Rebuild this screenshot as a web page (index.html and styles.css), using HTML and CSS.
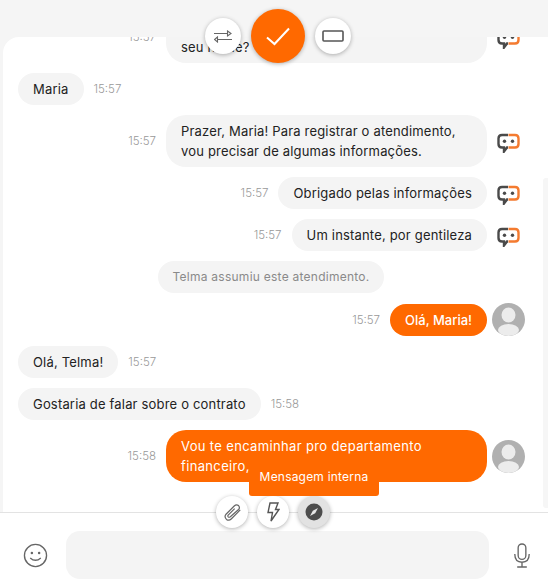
FILE: index.html
```html
<!DOCTYPE html>
<html lang="en">

<head>
    <meta charset="UTF-8">
    <meta name="viewport" content="width=device-width, initial-scale=1.0">
    <title>Atendimento</title>
    <link rel="stylesheet" href="styles.css">
</head>

<body>
    <svg class="sprites" width="0" height="0">
        <symbol id="bot" viewBox="0 0 23 20">
            <path d="M11 2H5Q1.500 2 1.500 5.500V11Q1.500 14.500 5 14.500H7V18.500L10 14.500H11" fill="none" stroke="#4a4a4a" stroke-width="2.400" />
            <path d="M11.500 2H18Q21.500 2 21.500 5.500V11Q21.500 14.500 18 14.500H11.500" fill="none" stroke="#f47b30" stroke-width="2.400" />
            <circle cx="7.500" cy="8.200" r="1.700" fill="#4a4a4a" />
            <circle cx="15.500" cy="8.200" r="1.700" fill="#4a4a4a" />
        </symbol>
        <symbol id="avatar" viewBox="0 0 33 33">
            <circle cx="16.500" cy="16.500" r="16.500" fill="#b0b0b0" />
            <ellipse cx="16.500" cy="12" rx="7" ry="7.500" fill="#ececec" />
            <ellipse cx="16.500" cy="27" rx="10.500" ry="6" fill="#ececec" />
        </symbol>
    </svg>

    <div class="app">
        <!-- Top actions -->
        <div class="top-band"></div>
        <div class="top-actions">
            <button class="round">
                <svg width="18" height="13" viewBox="0 0 18 13" fill="none" stroke="#666" stroke-width="1.100">
                    <path d="M0 3.500H14M3 9.500H18" />
                    <path d="M13.500 1L17 3.500L13.500 6Z" />
                    <path d="M3.500 7L0.500 9.500L3.500 12Z" />
                </svg>
            </button>
            <button class="round round-main">
                <svg width="24" height="19" viewBox="0 0 24 19" fill="none" stroke="#fff" stroke-width="2">
                    <path d="M1 10.500L8.500 17L23 1.500" />
                </svg>
            </button>
            <button class="round">
                <svg width="22" height="12" viewBox="0 0 22 12" fill="none" stroke="#555" stroke-width="1.600">
                    <rect x="1" y="1" width="20" height="10" rx="1" />
                </svg>
            </button>
        </div>

        <!-- Messages -->
        <div class="chat">
            <div class="scroll-track"></div>
            <div class="messages">
                <div class="row out">
                    <span class="time">15:57</span>
                    <p class="bubble wide">Antes de continuar, pode me dizer<br>seu nome?</p>
                    <svg class="side-icon"><use href="#bot" /></svg>
                </div>
                <div class="row in">
                    <p class="bubble">Maria</p>
                    <span class="time">15:57</span>
                </div>
                <div class="row out">
                    <span class="time">15:57</span>
                    <p class="bubble wide">Prazer, Maria! Para registrar o atendimento,<br>vou precisar de algumas informações.</p>
                    <svg class="side-icon"><use href="#bot" /></svg>
                </div>
                <div class="row out">
                    <span class="time">15:57</span>
                    <p class="bubble">Obrigado pelas informações</p>
                    <svg class="side-icon"><use href="#bot" /></svg>
                </div>
                <div class="row out">
                    <span class="time">15:57</span>
                    <p class="bubble">Um instante, por gentileza</p>
                    <svg class="side-icon"><use href="#bot" /></svg>
                </div>
                <div class="row system">
                    <p class="bubble">Telma assumiu este atendimento.</p>
                </div>
                <div class="row out">
                    <span class="time">15:57</span>
                    <p class="bubble orange">Olá, Maria!</p>
                    <svg class="side-avatar"><use href="#avatar" /></svg>
                </div>
                <div class="row in">
                    <p class="bubble">Olá, Telma!</p>
                    <span class="time">15:57</span>
                </div>
                <div class="row in">
                    <p class="bubble">Gostaria de falar sobre o contrato</p>
                    <span class="time">15:58</span>
                </div>
                <div class="row out">
                    <span class="time">15:58</span>
                    <p class="bubble orange wide">Vou te encaminhar pro departamento<br>financeiro,</p>
                    <svg class="side-avatar"><use href="#avatar" /></svg>
                </div>
            </div>
        </div>

        <!-- Composer -->
        <div class="composer">
            <div class="tools">
                <span class="tooltip">Mensagem interna</span>
                <button class="round tool">
                    <svg width="19" height="19" viewBox="0 0 22 22" fill="none" stroke="#666" stroke-width="1.400">
                        <path d="M20 8L9.500 18.500Q7 21 4 19Q1 16 3.500 13L13 3.500Q15.500 1 18 3Q20 5.500 18 7.500L8.500 16Q7 17 6 16Q5.200 15 6 14L13.500 6.500" />
                    </svg>
                </button>
                <button class="round tool">
                    <svg width="13" height="20" viewBox="0 0 13 20" fill="none" stroke="#555" stroke-width="1.400">
                        <path d="M3 1H11L8.500 7.500H12L4 19L5.500 10.500H1Z" />
                    </svg>
                </button>
                <button class="round tool tool-active">
                    <svg width="18" height="18" viewBox="0 0 18 18">
                        <circle cx="9" cy="9" r="8.500" fill="#4d4d4d" />
                        <path d="M13 5L10.200 10.200L5 13L7.800 7.800Z" fill="#e8e8e8" />
                    </svg>
                </button>
            </div>
            <svg class="composer-icon" width="25" height="25" viewBox="0 0 26 26" fill="none" stroke="#666" stroke-width="1.400">
                <circle cx="13" cy="13" r="11.500" />
                <circle cx="9.200" cy="10.500" r="1.300" fill="#666" stroke="none" />
                <circle cx="16.800" cy="10.500" r="1.300" fill="#666" stroke="none" />
                <path d="M7.500 15.500Q13 20.500 18.500 15.500" />
            </svg>
            <div class="input"></div>
            <svg class="composer-icon mic" width="18" height="25" viewBox="0 0 18 26" fill="none" stroke="#666" stroke-width="1.400">
                <rect x="5" y="1" width="8" height="16" rx="4" />
                <path d="M1.500 11.500Q1.500 20 9 20Q16.500 20 16.500 11.500M9 20V25M4 25H14" />
            </svg>
        </div>
    </div>
</body>

</html>
```

FILE: styles.css
```css
* {
    font-family: "Inter", sans-serif;
    margin: 0;
    padding: 0;
    box-sizing: border-box;
}

html,
body {
    height: 100%;
    overflow: hidden;
}

body {
    background-color: #f5f5f5;
    color: #222222;
}

.sprites {
    position: absolute;
}

.app {
    position: relative;
    display: flex;
    flex-direction: column;
    height: 584px;
}

.top-band {
    height: 37px;
    flex-shrink: 0;
}

.top-actions {
    position: absolute;
    top: 9px;
    left: 205px;
    z-index: 3;
    display: flex;
    align-items: center;
    gap: 10px;
}

.round {
    display: flex;
    align-items: center;
    justify-content: center;
    width: 36px;
    height: 36px;
    border: 0;
    border-radius: 50%;
    background-color: #ffffff;
    box-shadow: 0 1px 4px rgba(0, 0, 0, 0.3);
}

.round-main {
    width: 54px;
    height: 54px;
    background-color: #ff6900;
}

.chat {
    position: relative;
    flex: 1;
    min-height: 0;
    margin-left: 3px;
    background-color: #ffffff;
    border-radius: 16px 0 0 0;
    overflow: hidden;
}

.scroll-track {
    position: absolute;
    top: 141px;
    right: 0;
    bottom: 4px;
    width: 5px;
    background-color: #f6f6f6;
    border-radius: 3px 0 0 3px;
}

.messages {
    display: flex;
    flex-direction: column;
    justify-content: flex-end;
    gap: 10px;
    height: 100%;
    padding: 0 23px 30px 15px;
}

.row {
    display: flex;
    flex-shrink: 0;
    align-items: center;
    gap: 10px;
}

.out {
    justify-content: flex-end;
}

.system {
    justify-content: center;
    padding-right: 1px;
}

.system .bubble {
    color: #8a8a8a;
    font-size: 12px;
    letter-spacing: 0.25px;
}

.bubble {
    height: 32px;
    padding: 6px 15px;
    border-radius: 16px;
    background-color: #f4f4f4;
    font-size: 13px;
    line-height: 20px;
    letter-spacing: 0.18px;
    white-space: nowrap;
}

.wide {
    width: 321px;
    height: 52px;
    border-radius: 20px;
}

.orange {
    background-color: #ff6900;
    color: #ffffff;
    font-weight: 500;
    letter-spacing: 0;
}

.orange.wide {
    font-weight: 400;
    letter-spacing: 0.35px;
}

.time {
    color: #999999;
    font-size: 11.5px;
    font-weight: 300;
}

.side-icon {
    width: 23px;
    height: 20px;
    margin: 3px 5px 0 0;
}

.side-avatar {
    width: 33px;
    height: 33px;
    margin-left: -5px;
}

.composer {
    position: relative;
    display: flex;
    flex-shrink: 0;
    align-items: center;
    gap: 18px;
    height: 72px;
    padding: 18px 17px 5px 23px;
    background-color: #ffffff;
    border-top: 1px solid #e3e3e3;
}

.tools {
    position: absolute;
    top: -17px;
    left: 216px;
    display: flex;
    gap: 9px;
}

.tool {
    width: 32px;
    height: 32px;
}

.tool-active {
    background-color: #e2e2e2;
}

.tooltip {
    position: absolute;
    top: -28px;
    left: 33px;
    width: 130px;
    padding: 0 0 10px;
    border-radius: 0 0 3px 3px;
    background-color: #ff6900;
    color: #ffffff;
    font-size: 12px;
    line-height: 18px;
    letter-spacing: 0.2px;
    text-align: center;
}

.composer-icon {
    flex-shrink: 0;
}

.mic {
    margin-left: 6px;
}

.input {
    flex: 1;
    height: 48px;
    border-radius: 14px;
    background-color: #f4f4f4;
}
```
